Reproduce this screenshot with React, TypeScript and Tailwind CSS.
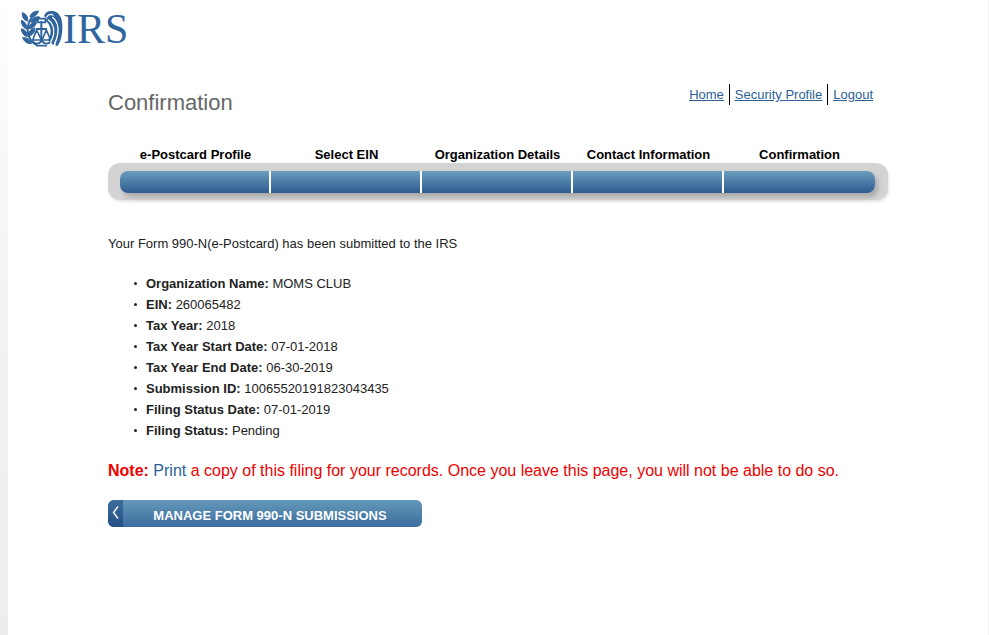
const steps = [
  "e-Postcard Profile",
  "Select EIN",
  "Organization Details",
  "Contact Information",
  "Confirmation",
];

const details: [string, string][] = [
  ["Organization Name:", "MOMS CLUB"],
  ["EIN:", "260065482"],
  ["Tax Year:", "2018"],
  ["Tax Year Start Date:", "07-01-2018"],
  ["Tax Year End Date:", "06-30-2019"],
  ["Submission ID:", "10065520191823043435"],
  ["Filing Status Date:", "07-01-2019"],
  ["Filing Status:", "Pending"],
];

function EagleMark() {
  return (
    <svg viewBox="0 0 126 114" className="h-[38px] w-[42px]" fill="none" stroke="#2f659c" aria-hidden="true">
      {/* olive branch */}
      <path d="M40 16C20 32 14 62 26 84c5 10 12 17 22 21" strokeWidth="6" />
      <g fill="#2f659c" strokeWidth="3" strokeLinejoin="round">
        <path d="M27 21C29 10 38 4 52 3c-2 11-11 18-25 18Z" />
        <path d="M29 36c4-12 14-17 27-15-4 11-13 17-27 15Z" />
        <path d="M20 34C8 30 3 21 4 8c12 4 18 13 16 26Z" />
        <path d="M22 56c3-13 12-20 25-20-3 12-11 20-25 20Z" />
        <path d="M16 57C6 53 1 44 1 31c12 4 17 13 15 26Z" />
        <path d="M22 78c0-13 7-21 20-24 0 13-7 22-20 24Z" />
        <path d="M19 80C8 77 2 69 1 56c12 3 18 11 18 24Z" />
        <path d="M32 101C20 102 10 96 5 83c13-1 22 5 27 18Z" />
      </g>
      {/* scales */}
      <path d="M61 33v64M45 57h33" strokeWidth="6" />
      <path d="M51 26h22v11H51z" strokeWidth="5" />
      <path d="M47 60 35 90h26L47 60Zm29 0L63 90h26L76 60Z" strokeWidth="5" strokeLinejoin="round" />
      <path d="M34 92c5 12 22 12 27 0m2 0c5 12 22 12 27 0" strokeWidth="5" />
      <path d="M45 107h33" strokeWidth="5" />
      {/* head and wing */}
      <path d="M69 19C72 6 84 1 98 4c17 3 25 20 26 42 1 27-4 48-15 63l-6-4 2-8-9 8-5-6 3-10-9 7-4-7c8-11 10-24 6-37-2-9-8-16-16-21l8-6-10-6Z" fill="#2f659c" stroke="none" />
      <g stroke="white" strokeWidth="4" strokeLinecap="round">
        <path d="M78 20c4-6 12-8 18-5" />
        <path d="M82 30c13 9 18 24 16 42-2 11-5 18-9 24" />
        <path d="M95 22c14 12 19 29 15 51-2 11-5 20-9 27" />
      </g>
    </svg>
  );
}

export default function App() {
  return (
    <div className="flex min-h-screen bg-white font-['Liberation_Sans',Arial,sans-serif] text-[13px] leading-[21px] text-[#222]">
      <div className="w-2 shrink-0 bg-linear-to-b from-white via-[#f2f2f2] via-50% to-[#ededed]" />
      <div className="grow border-r border-[#f5f5f5] pb-10">
        <header className="flex h-12 items-start pt-[10px] pl-[13px]">
          <EagleMark />
          <span className="font-['Liberation_Serif','Times_New_Roman',serif] text-[42px] leading-[38px] text-[#2f659c]">IRS</span>
        </header>

        <main className="ml-[100px] max-w-[780px]">
          <div className="flex items-start justify-between pt-9 pr-[15px]">
            <h1 className="pt-1 text-[22px] leading-[30px] text-[#666]">Confirmation</h1>
            <nav className="flex text-[#2c5f96] underline">
              <a href="#home" className="pr-[5px]">Home</a>
              <a href="#security" className="border-l border-black px-[5px]">Security Profile</a>
              <a href="#logout" className="border-l border-black pl-[5px]">Logout</a>
            </nav>
          </div>

          <section className="mt-[26px]" aria-label="Progress">
            <ol className="grid grid-cols-5 pr-[13px] pl-3 text-center font-bold text-black">
              {steps.map((step) => (
                <li key={step} className="h-[19px]">{step}</li>
              ))}
            </ol>
            <div className="h-[37px] rounded-xl bg-[#d3d3d3] pt-2 pr-[13px] pl-3 shadow-[1px_2px_3px_#e5e5e5]">
              <div className="grid h-[22px] grid-cols-5 overflow-hidden rounded-lg shadow-[3px_4px_5px_#aaa]">
                {steps.map((step) => (
                  <div key={step} className="border-r-2 border-white bg-linear-to-b from-[#6b9dbd] to-[#2e5c91] last:border-r-0" />
                ))}
              </div>
            </div>
          </section>

          <p className="mt-[33px]">Your Form 990-N(e-Postcard) has been submitted to the IRS</p>

          <ul className="mt-[19px]">
            {details.map(([label, value]) => (
              <li key={label} className="flex items-center pl-[26px]">
                <span className="mr-[9px] size-[3px] rounded-full bg-[#222]" />
                <span><strong>{label}</strong> {value}</span>
              </li>
            ))}
          </ul>

          <p className="mt-[19px] text-base leading-[21px] text-[#ee0000]">
            <strong>Note:</strong> <a href="#print" className="text-[#2c5f96]">Print</a> a copy of this filing for your records. Once you leave this page, you will not be able to do so.
          </p>

          <button type="button" className="mt-[19px] flex h-[27px] w-[314px] overflow-hidden rounded-md bg-linear-to-b from-[#6599b8] to-[#3b6c9f] font-bold text-white">
            <span className="flex h-full w-[15px] justify-center bg-linear-to-b from-[#3c6d9c] to-[#254f86] pt-[5px]">
              <svg viewBox="0 0 7 15" className="h-[15px] w-[7px]" fill="none" stroke="white" strokeWidth="1.4" aria-hidden="true">
                <path d="M6 1.5 1.5 7.5 6 13.5" />
              </svg>
            </span>
            <span className="grow pt-px pr-[5px] leading-[29px]">MANAGE FORM 990-N SUBMISSIONS</span>
          </button>
        </main>
      </div>
    </div>
  );
}
